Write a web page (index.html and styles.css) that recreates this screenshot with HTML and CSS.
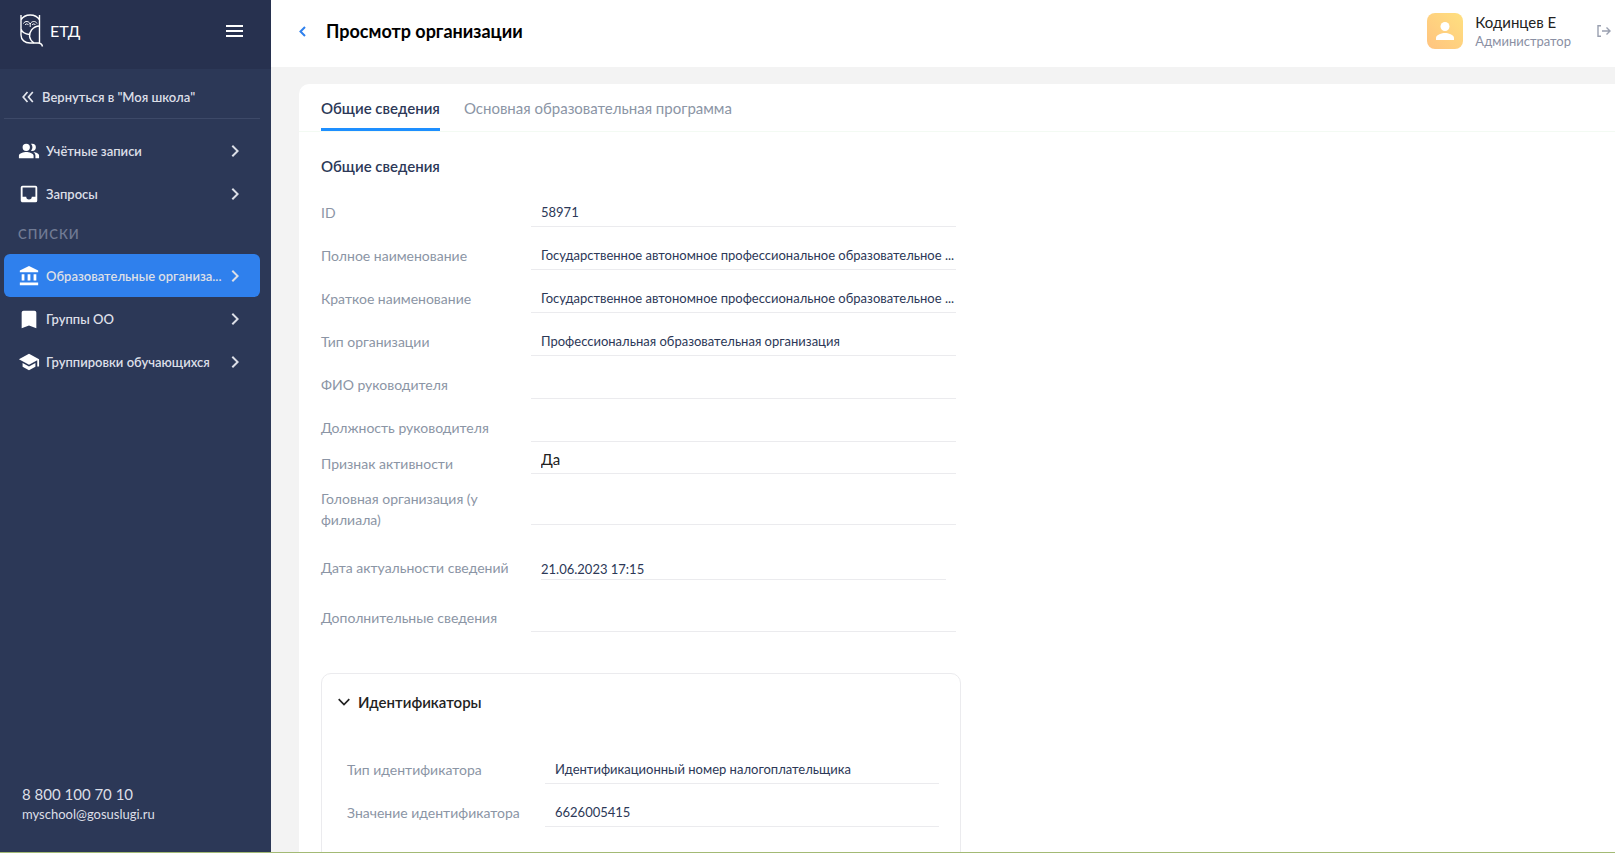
FILE: index.html
```html
<!DOCTYPE html>
<html lang="ru">
<head>
<meta charset="utf-8">
<title>Просмотр организации</title>
<link rel="stylesheet" href="styles.css">
</head>
<body>
<svg class="defs" aria-hidden="true">
  <symbol id="chev" viewBox="0 0 24 24"><path d="M8.6 16.6 13.2 12 8.6 7.4 10 6l6 6-6 6z"/></symbol>
</svg>
<div class="app">
  <aside class="sidebar">
    <div class="brand">
      <svg class="owl" viewBox="0 0 24 33" fill="none" stroke="#fff" stroke-width="1.4" aria-hidden="true">
        <path d="M1 1v20c0 5 4 8 9 8h8c3 0 4 1 4.500 3.500M19.500 1v28M1 6C3 2.500 6.500 1 10.200 1s7.300 1.500 9.300 5M1 15c1 3 4 5 8.500 5.500"/>
        <path d="M19.500 12c-4 0-6 1.500-8 4-3 4-3 9 2.500 13"/>
        <path d="M3.500 9.500C5 6.500 9 7 10.200 10 11.500 7 15.500 6.500 17 9.500M10.200 9v4M5 11c1-1.500 2.500-1.500 3.500 0M12 11c1-1.500 2.500-1.500 3.500 0" stroke-width="1"/>
      </svg>
      <span class="brand-name">ЕТД</span>
      <button class="burger" type="button" aria-label="Меню">
        <svg viewBox="0 0 17 12" fill="#fff"><path d="M0 0h17v2H0zM0 5h17v2H0zM0 10h17v2H0z"/></svg>
      </button>
    </div>
    <nav class="nav">
      <a class="back" href="#">
        <svg viewBox="0 0 12 12" fill="none" stroke="#e4e7ee" stroke-width="1.700"><path d="M5.500 1 1.200 6l4.300 5M10.800 1 6.500 6l4.300 5"/></svg>
        <span>Вернуться в "Моя школа"</span>
      </a>
      <a class="item" href="#">
        <svg class="ico" viewBox="0 0 24 24"><path d="M16.700 13.100c1.400 1 2.300 2.200 2.300 3.900v3h4v-3c0-2.200-3-3.500-6.300-3.900zM9 12a4 4 0 1 0 0-8 4 4 0 0 0 0 8zM15.500 12a4 4 0 1 0 0-8c-.500 0-.900.100-1.300.200a6 6 0 0 1 0 7.600c.400.100.800.200 1.300.200zM9 13c-2.700 0-8 1.300-8 4v3h16v-3c0-2.700-5.300-4-8-4z"/></svg>
        <span>Учётные записи</span><svg class="chev"><use href="#chev"/></svg>
      </a>
      <a class="item" href="#">
        <svg class="ico" viewBox="0 0 24 24"><path d="M19 3H5a2 2 0 0 0-2 2v14c0 1.100.900 2 2 2h14a2 2 0 0 0 2-2V5a2 2 0 0 0-2-2zm0 12h-4a3 3 0 0 1-6 0H5V5h14z"/></svg>
        <span>Запросы</span><svg class="chev"><use href="#chev"/></svg>
      </a>
      <h2 class="group">СПИСКИ</h2>
      <a class="item active" href="#">
        <svg class="ico" viewBox="0 0 24 24"><path d="M4 10v7h3v-7zm6.500 0v7h3v-7zM2 22h20v-3H2zm15-12v7h3v-7zM12 1 2 6v2h20V6z"/></svg>
        <span>Образовательные организа...</span><svg class="chev"><use href="#chev"/></svg>
      </a>
      <a class="item" href="#">
        <svg class="ico" viewBox="0 0 24 24"><path d="M18 3H6a2 2 0 0 0-2 2v17l8-3 8 3V5a2 2 0 0 0-2-2z"/></svg>
        <span>Группы ОО</span><svg class="chev"><use href="#chev"/></svg>
      </a>
      <a class="item" href="#">
        <svg class="ico" viewBox="0 0 24 24"><path d="M5 13.200v4L12 21l7-3.800v-4L12 17zM12 3 1 9l11 6 9-4.900V17h2V9z"/></svg>
        <span>Группировки обучающихся</span><svg class="chev"><use href="#chev"/></svg>
      </a>
    </nav>
    <address class="contacts">
      <a class="phone" href="tel:88001007010">8 800 100 70 10</a>
      <a class="mail" href="mailto:myschool@gosuslugi.ru">myschool@gosuslugi.ru</a>
    </address>
  </aside>

  <div class="main">
    <header class="topbar">
      <button class="prev" type="button" aria-label="Назад">
        <svg viewBox="0 0 7 11" fill="none" stroke="#2f80ed" stroke-width="2"><path d="M6 1 1.500 5.500 6 10"/></svg>
      </button>
      <h1>Просмотр организации</h1>
      <div class="user">
        <svg class="avatar" viewBox="0 0 36 36" aria-hidden="true">
          <defs><linearGradient id="sun" x1="1" y1="0" x2="0" y2="1"><stop offset="0" stop-color="#ffe07f"/><stop offset="1" stop-color="#ffc380"/></linearGradient></defs>
          <rect width="36" height="36" rx="8" fill="url(#sun)"/>
          <circle cx="18" cy="13.500" r="4.500" fill="#fff"/>
          <path d="M9 27v-2.300c0-3 6-4.700 9-4.700s9 1.700 9 4.700V27z" fill="#fff"/>
        </svg>
        <div class="who"><span class="name">Кодинцев Е</span><span class="role">Администратор</span></div>
        <button class="exit" type="button" aria-label="Выйти">
          <svg viewBox="0 0 14 12" fill="none" stroke="#9aa0b0" stroke-width="1.400"><path d="M4 .7H1v10.600h3M5 6h8M9.500 2.500 13 6 9.500 9.500"/></svg>
        </button>
      </div>
    </header>

    <main class="content">
      <section class="card">
        <div class="tabs" role="tablist">
          <button class="tab selected" type="button" role="tab" aria-selected="true">Общие сведения</button>
          <button class="tab" type="button" role="tab" aria-selected="false">Основная образовательная программа</button>
        </div>
        <form class="form">
          <h2 class="heading">Общие сведения</h2>
          <div class="row"><label for="f1">ID</label><input id="f1" readonly value="58971"></div>
          <div class="row"><label for="f2">Полное наименование</label><input id="f2" readonly value="Государственное автономное профессиональное образовательное ..."></div>
          <div class="row"><label for="f3">Краткое наименование</label><input id="f3" readonly value="Государственное автономное профессиональное образовательное ..."></div>
          <div class="row"><label for="f4">Тип организации</label><input id="f4" readonly value="Профессиональная образовательная организация"></div>
          <div class="row"><label for="f5">ФИО руководителя</label><input id="f5" readonly></div>
          <div class="row"><label for="f6">Должность руководителя</label><input id="f6" readonly></div>
          <div class="row flag"><label for="f7">Признак активности</label><input id="f7" readonly value="Да"></div>
          <div class="row parent"><label for="f8">Головная организация (у филиала)</label><input id="f8" readonly></div>
          <div class="row date"><label for="f9">Дата актуальности сведений</label><input id="f9" readonly value="21.06.2023 17:15"></div>
          <div class="row extra"><label for="f10">Дополнительные сведения</label><input id="f10" readonly></div>

          <details class="ids" open>
            <summary><svg viewBox="0 0 12 8" fill="none" stroke="#222" stroke-width="1.700"><path d="M.7 1.200 6 6.500l5.300-5.300"/></svg>Идентификаторы</summary>
            <div class="row"><label for="f11">Тип идентификатора</label><input id="f11" readonly value="Идентификационный номер налогоплательщика"></div>
            <div class="row"><label for="f12">Значение идентификатора</label><input id="f12" readonly value="6626005415"></div>
          </details>
        </form>
      </section>
    </main>
  </div>
</div>
</body>
</html>
```
FILE: styles.css
```css
* { box-sizing: border-box; }
body {
  margin: 0;
  font-family: Lato, "Open Sans", sans-serif;
  font-size: 14px;
  color: #2c3857;
  background: #f3f3f3;
}
button, input { font: inherit; color: inherit; background: none; border: 0; padding: 0; margin: 0; }
a { color: inherit; text-decoration: none; }
h1, h2 { margin: 0; }
svg { display: block; flex: none; }
.defs { display: none; }

.app { display: flex; height: 100vh; overflow: hidden; border-bottom: 1px solid #a3ba75; }

/* Sidebar */
.sidebar { flex: none; width: 271px; display: flex; flex-direction: column; background: #2c3857; color: #dcdfe7; }
.brand { height: 69px; display: flex; align-items: center; padding: 0 28px 8px 20px; background: #27314f; }
.owl { width: 24px; height: 33px; }
.brand-name { margin-left: 6px; font-size: 16px; color: #fff; }
.burger { margin-left: auto; }
.burger svg { width: 17px; height: 12px; }
.nav { padding: 8px 11px 0 4px; font-size: 13px; font-weight: 600; }
.back {
  display: flex; align-items: center; gap: 8px; height: 42px; padding: 0 0 2px 18px;
  margin-bottom: 10px; border-bottom: 1px solid #3d4968;
}
.back svg { width: 12px; height: 12px; }
.item { display: flex; align-items: center; height: 43px; padding: 0 13px 0 14px; border-radius: 6px; }
.item span { flex: 1; min-width: 0; margin-left: 6px; overflow: hidden; text-overflow: ellipsis; white-space: nowrap; }
.ico { width: 22px; height: 22px; fill: #fff; }
.chev { width: 24px; height: 24px; fill: #dcdfe7; }
.group { height: 39px; line-height: 38px; padding-left: 14px; font-size: 13px; font-weight: 600; letter-spacing: 1px; color: #717b94; }
.active { background: #2f80ed; }
.contacts { margin-top: auto; padding: 0 22px 28px; display: flex; flex-direction: column; font-size: 13px; font-style: normal; line-height: 20px; }
.phone { font-size: 15px; }

/* Top bar */
.main { flex: 1; min-width: 0; display: flex; flex-direction: column; }
.topbar { flex: none; height: 67px; display: flex; align-items: center; padding: 0 4px 5px 28px; background: #fff; }
.prev svg { width: 7px; height: 11px; }
h1 { margin-left: 20px; font-size: 18px; font-weight: 700; color: #000; }
.user { margin-left: auto; display: flex; align-items: center; }
.avatar { width: 36px; height: 36px; }
.who { display: flex; flex-direction: column; margin: 2px 26px 0 12px; line-height: 19px; }
.name { font-size: 15px; color: #222; }
.role { font-size: 13px; color: #8a8fa3; }
.exit svg { width: 14px; height: 12px; }

/* Card */
.content { flex: 1; min-height: 0; padding: 17px 0 0 28px; overflow: hidden; }
.card { background: #fff; border-radius: 10px 0 0 0; min-height: 100%; }
.tabs { display: flex; gap: 24px; height: 48px; padding: 0 22px; border-bottom: 1px solid #f3faf3; }
.tab { height: 47px; padding-top: 3px; border-bottom: 3px solid transparent; font-size: 15px; color: #8b95a5; }
.selected { font-weight: 600; color: #2c3857; border-color: #1e8fff; }
.form { padding: 24px 22px 0; }
.heading { font-size: 15px; font-weight: 600; line-height: 20px; margin-bottom: 8px; }
.row { display: grid; grid-template-columns: 210px minmax(0, 425px); align-items: end; height: 43px; }
.row label { width: 170px; line-height: 21px; padding-bottom: 4px; color: #8b95a5; white-space: nowrap; }
.row input { width: 100%; height: 28px; padding: 0 0 1px 10px; border-bottom: 1px solid #ebebee; font-size: 13px; text-overflow: ellipsis; outline: 0; }
.row.flag { height: 32px; }
.row.flag input { font-size: 15px; color: #222; padding-bottom: 2px; }
.row.flag label { padding-bottom: 0; }
.row.parent { height: 51px; }
.row.parent label { white-space: normal; padding-bottom: 0; margin-bottom: -5px; }
.row.date { height: 55px; }
.row.date label { padding-bottom: 2px; }
.row.date input { width: auto; height: 22px; margin: 0 10px; padding: 0; }
.row.extra { height: 52px; }

.ids { max-width: 640px; margin-top: 41px; padding: 18px 21px 40px 25px; border: 1px solid #ebebee; border-radius: 10px; }
.ids summary { display: flex; align-items: center; gap: 8px; margin: 0 0 29px -9px; line-height: 20px; font-size: 15px; font-weight: 600; color: #222; list-style: none; }
.ids summary svg { width: 12px; height: 8px; }
.ids .row { grid-template-columns: 198px minmax(0, 394px); }
```
